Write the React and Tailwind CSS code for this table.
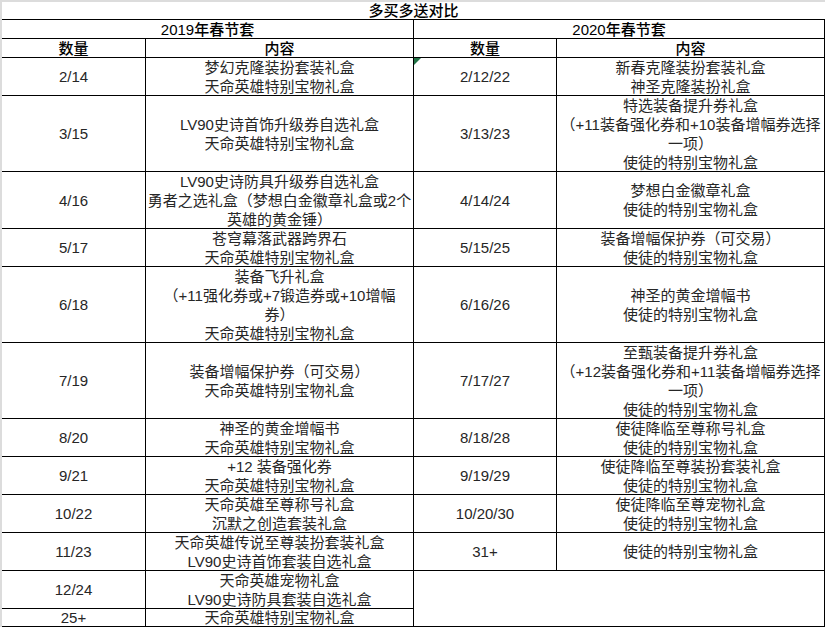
const left = [
  { n: '2/14', lines: ['梦幻克隆装扮套装礼盒', '天命英雄特别宝物礼盒'] },
  { n: '3/15', lines: ['LV90史诗首饰升级券自选礼盒', '天命英雄特别宝物礼盒'] },
  { n: '4/16', lines: ['LV90史诗防具升级券自选礼盒', '勇者之选礼盒（梦想白金徽章礼盒或2个', '英雄的黄金锤）'] },
  { n: '5/17', lines: ['苍穹幕落武器跨界石', '天命英雄特别宝物礼盒'] },
  { n: '6/18', lines: ['装备飞升礼盒', '（+11强化券或+7锻造券或+10增幅', '券）', '天命英雄特别宝物礼盒'] },
  { n: '7/19', lines: ['装备增幅保护券（可交易）', '天命英雄特别宝物礼盒'] },
  { n: '8/20', lines: ['神圣的黄金增幅书', '天命英雄特别宝物礼盒'] },
  { n: '9/21', lines: ['+12 装备强化券', '天命英雄特别宝物礼盒'] },
  { n: '10/22', lines: ['天命英雄至尊称号礼盒', '沉默之创造套装礼盒'] },
  { n: '11/23', lines: ['天命英雄传说至尊装扮套装礼盒', 'LV90史诗首饰套装自选礼盒'] },
  { n: '12/24', lines: ['天命英雄宠物礼盒', 'LV90史诗防具套装自选礼盒'] },
  { n: '25+', lines: ['天命英雄特别宝物礼盒'] },
]

const right = [
  { n: '2/12/22', lines: ['新春克隆装扮套装礼盒', '神圣克隆装扮礼盒'], mark: true },
  { n: '3/13/23', lines: ['特选装备提升券礼盒', '（+11装备强化券和+10装备增幅券选择', '一项）', '使徒的特别宝物礼盒'] },
  { n: '4/14/24', lines: ['梦想白金徽章礼盒', '使徒的特别宝物礼盒'] },
  { n: '5/15/25', lines: ['装备增幅保护券（可交易）', '使徒的特别宝物礼盒'] },
  { n: '6/16/26', lines: ['神圣的黄金增幅书', '使徒的特别宝物礼盒'] },
  { n: '7/17/27', lines: ['至甄装备提升券礼盒', '（+12装备强化券和+11装备增幅券选择', '一项）', '使徒的特别宝物礼盒'] },
  { n: '8/18/28', lines: ['使徒降临至尊称号礼盒', '使徒的特别宝物礼盒'] },
  { n: '9/19/29', lines: ['使徒降临至尊装扮套装礼盒', '使徒的特别宝物礼盒'] },
  { n: '10/20/30', lines: ['使徒降临至尊宠物礼盒', '使徒的特别宝物礼盒'] },
  { n: '31+', lines: ['使徒的特别宝物礼盒'] },
]

const cell = 'border-r border-b border-black flex flex-col items-center justify-center text-center whitespace-nowrap'

function Row({ r }) {
  return (
    <>
      <div className={`${cell} relative`}>
        {r.n}
      </div>
      <div className={cell}>
        {r.lines.map((l, i) => <div key={i}>{l}</div>)}
      </div>
    </>
  )
}

export default function App() {
  const rows = []
  left.forEach((r, i) => {
    rows.push(<Row key={'l' + i} r={r} />)
    if (right[i]) {
      rows.push(
        <div key={'r' + i} className="contents">
          <div className={`${cell} relative`}>
            {right[i].mark && (
              <svg className="absolute left-0 top-0" width="7" height="7" viewBox="0 0 7 7">
                <polygon points="0,0 7,0 0,7" fill="#217346" />
              </svg>
            )}
            {right[i].n}
          </div>
          <div className={cell}>
            {right[i].lines.map((l, j) => <div key={j}>{l}</div>)}
          </div>
        </div>
      )
    } else if (i === right.length) {
      rows.push(<div key="empty" className="col-span-2 row-span-2 border-r border-b border-black" />)
    }
  })

  return (
    <div className="bg-white w-[826px] h-[628px]">
      <div
        className="w-[825px] border-l-2 border-t-2 border-[#dcdcdc] grid grid-cols-[144px_268px_143px_268px] grid-rows-[18px_19px_19px_38px_76px_57px_38px_76px_76px_38px_38px_38px_38px_38px_18px] text-[15px] leading-[19px] text-[#262626]"
        style={{ fontFamily: '"Liberation Sans", "Noto Sans CJK SC", sans-serif' }}
      >
        {/* 标题 */}
        <div className="col-span-4 border-b border-black flex items-center justify-center font-medium text-black">
          多买多送对比
        </div>
        <div className="col-span-2 border-r border-b border-black flex items-center justify-center font-medium text-black">
          2019年春节套
        </div>
        <div className="col-span-2 border-r border-b border-black flex items-center justify-center font-medium text-black">
          2020年春节套
        </div>
        <div className={`${cell} font-medium text-black`}>数量</div>
        <div className={`${cell} font-medium text-black`}>内容</div>
        <div className={`${cell} font-medium text-black`}>数量</div>
        <div className={`${cell} font-medium text-black`}>内容</div>
        {rows}
      </div>
    </div>
  )
}
